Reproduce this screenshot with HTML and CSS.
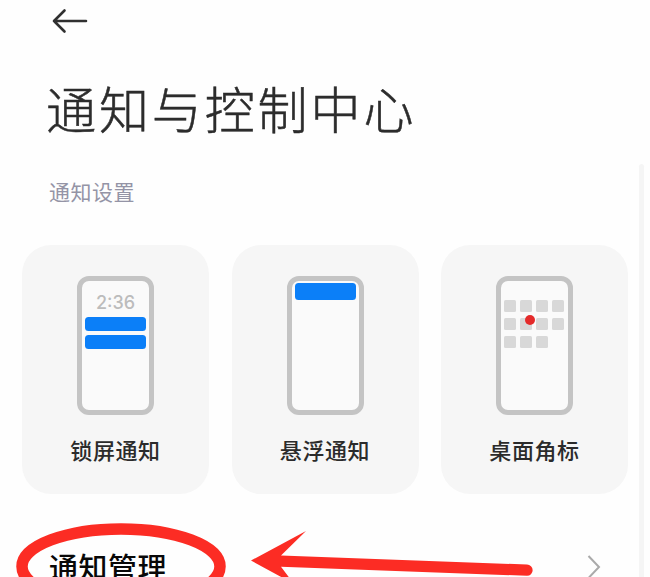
FILE: index.html
```html
<!DOCTYPE html>
<html lang="zh-CN">
<head>
<meta charset="utf-8">
<title>通知与控制中心</title>
<link rel="stylesheet" href="styles.css">
</head>
<body>
<main class="screen">
  <svg class="back" width="36" height="26" viewBox="0 0 36 26"><path d="M34 13H2M12.500 2.500L2 13L12.500 23.500"/></svg>
  <h1 class="title">通知与控制中心</h1>
  <h2 class="section">通知设置</h2>
  <div class="cards">
    <div class="card">
      <div class="phone lock">
        <span class="clock">2:36</span>
        <span class="bar"></span>
        <span class="bar"></span>
      </div>
      <span class="label">锁屏通知</span>
    </div>
    <div class="card">
      <div class="phone float"><span class="bar"></span></div>
      <span class="label">悬浮通知</span>
    </div>
    <div class="card">
      <div class="phone desktop">
        <div class="apps"><i></i><i></i><i></i><i></i><i></i><i class="marked"></i><i></i><i></i><i></i><i></i><i></i></div>
      </div>
      <span class="label">桌面角标</span>
    </div>
  </div>
  <div class="row">
    <span class="row-label">通知管理</span>
    <svg class="chevron" width="14" height="24" viewBox="0 0 14 24"><path d="M1.500 1L12 12L1.500 23"/></svg>
  </div>
  <div class="scrollbar"></div>
  <svg class="marks" width="650" height="77" viewBox="0 0 650 77">
    <ellipse class="ring" cx="121" cy="66.500" rx="99" ry="37.500"/>
    <path class="arrow" d="M251 60.500L306 31L281 55.500L527 64.500A5.500 5.500 0 0 1 527 75.800L281 66.700L294 84Z"/>
  </svg>
</main>
</body>
</html>
```
FILE: styles.css
```css
* { box-sizing: border-box; }
body { margin: 0; background: #fefefe; overflow: hidden; }
.screen {
  position: relative;
  width: 650px;
  height: 577px;
  overflow: hidden;
  padding: 8px 22px 0;
  font-family: "Noto Sans CJK SC", sans-serif;
}
.back { display: block; margin-left: 30px; }
.back path { fill: none; stroke: #303030; stroke-width: 2.600; stroke-linecap: round; stroke-linejoin: round; }
.title {
  margin: 37px 0 0 24px;
  font-size: 50px;
  line-height: 72px;
  font-weight: 300;
  letter-spacing: 2.900px;
  color: #2c2c2c;
  -webkit-text-stroke: .5px #2c2c2c;
}
.section {
  margin: 32px 0 0 27px;
  font-size: 21px;
  line-height: 32px;
  font-weight: 400;
  letter-spacing: .5px;
  color: #9494a6;
}
.cards { display: flex; gap: 22.500px; margin-top: 38px; }
.card {
  flex: 1;
  height: 249px;
  border-radius: 29px;
  background: #f6f6f6;
  display: flex;
  flex-direction: column;
  align-items: center;
  padding-top: 31px;
}
.phone {
  width: 77px;
  height: 139px;
  border: 5px solid #c4c4c4;
  border-radius: 12px;
  background: #fafafa;
  display: flex;
  flex-direction: column;
  align-items: center;
}
.clock {
  margin-top: 12px;
  font: 500 18px/20px Inter, sans-serif;
  color: #bcbcbc;
}
.bar { width: 61px; height: 14px; border-radius: 3.500px; background: #0b7ff8; margin-top: 4px; }
.float .bar { height: 17px; margin-top: 2px; }
.apps { display: grid; grid-template-columns: repeat(4, 12px); gap: 6px 4px; margin: 19px 1px 0 0; }
.apps i { position: relative; height: 12px; border-radius: 1.500px; background: #d8d8d8; }
.marked::after {
  content: "";
  position: absolute;
  left: 5px;
  top: -3px;
  width: 10px;
  height: 10px;
  border-radius: 50%;
  background: #e42b2b;
}
.label { margin-top: 17px; font-size: 22px; line-height: 34px; font-weight: 500; letter-spacing: .6px; color: #2b2b2b; }
.row { display: flex; justify-content: space-between; align-items: center; height: 44px; margin-top: 51px; padding: 0 27px; }
.row-label { margin-top: -2px; font-size: 29px; font-weight: 500; letter-spacing: .5px; color: #080808; }
.chevron path { fill: none; stroke: #aaa; stroke-width: 2; }
.scrollbar { position: absolute; left: 639px; top: 164px; bottom: 0; width: 5px; border-radius: 3px 3px 0 0; background: #f5f5f5; }
.marks { position: absolute; left: 0; top: 500px; }
.ring { fill: none; stroke: #fc2c24; stroke-width: 11.500; }
.arrow { fill: #fc2c24; }
```
